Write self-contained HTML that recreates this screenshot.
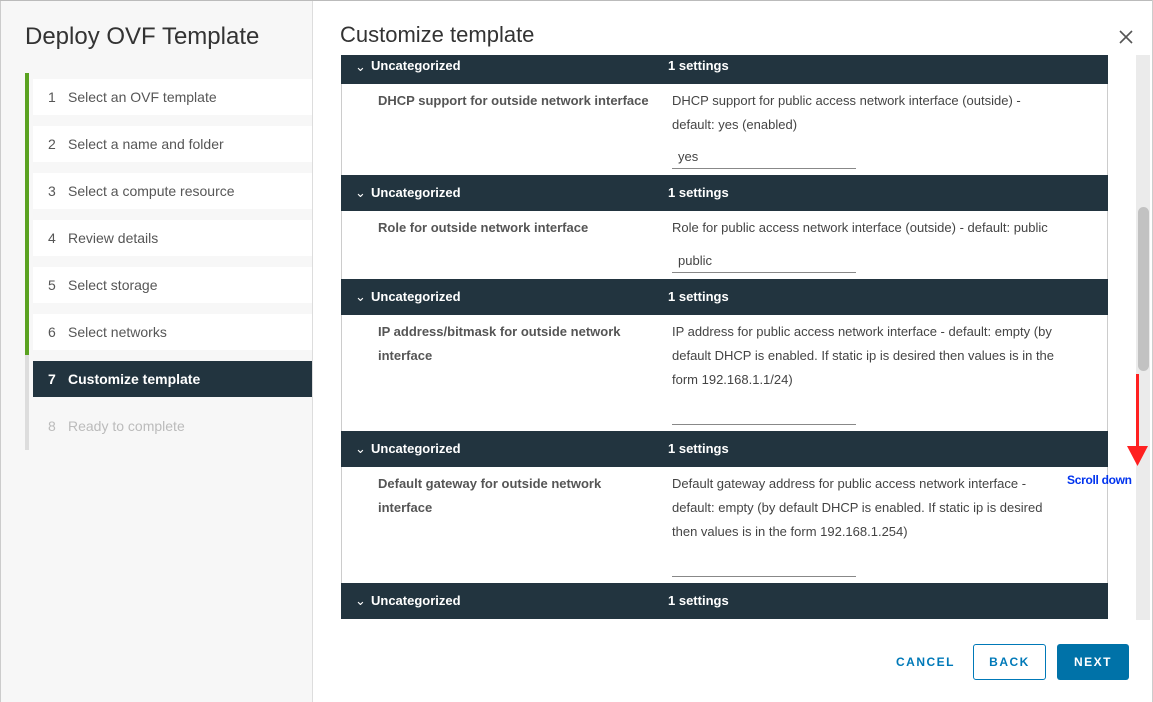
<!DOCTYPE html><html><head><meta charset="utf-8"><style>
*{box-sizing:border-box;margin:0;padding:0}
body{width:1153px;height:702px;overflow:hidden;background:#fff;font-family:"Liberation Sans",sans-serif;position:relative;color:#565656}
.abs{position:absolute}
.left{left:0;top:0;width:313px;height:702px;background:#f7f7f7;border-right:1px solid #ddd;border-left:1px solid #ccc;border-top:1px solid #ccc}
.step{position:absolute;left:32px;width:279px;height:36px;background:#fff;font-size:14px;line-height:36px;padding-left:15px;color:#565656}
.step span{display:inline-block;width:20px}
.hdr{position:absolute;left:341px;width:767px;height:36px;background:#22343f;color:#fff;font-size:13px;font-weight:bold;line-height:36px}
.hdr .c{position:absolute;left:14px;top:0;font-weight:normal}
.hdr .t{position:absolute;left:30px}
.hdr .s{position:absolute;left:327px}
.row{position:absolute;left:341px;width:767px;border-left:1px solid #ccc;border-right:1px solid #ccc;background:#fff;font-size:13px;color:#444}
.lab{position:absolute;left:36px;width:292px;line-height:24px;font-weight:bold;color:#555}
.desc{position:absolute;left:330px;width:405px;line-height:24px}
.inp{position:absolute;left:330px;width:184px;border-bottom:1px solid #888;height:24px;line-height:24px;padding-left:6px;font-size:13px}
</style></head><body>
<div class="abs left">
<div class="abs" style="left:24px;top:22px;font-size:24px;color:#333">Deploy OVF Template</div>
<div class="abs" style="left:24px;top:72px;width:4px;height:282px;background:#5aa220"></div>
<div class="abs" style="left:24px;top:354px;width:4px;height:95px;background:#ddd"></div>
<div class="step" style="top:78px"><span>1</span>Select an OVF template</div>
<div class="step" style="top:125px"><span>2</span>Select a name and folder</div>
<div class="step" style="top:172px"><span>3</span>Select a compute resource</div>
<div class="step" style="top:219px"><span>4</span>Review details</div>
<div class="step" style="top:266px"><span>5</span>Select storage</div>
<div class="step" style="top:313px"><span>6</span>Select networks</div>
<div class="step" style="top:360px;background:#22343f;color:#fff;font-weight:bold"><span>7</span>Customize template</div>
<div class="step" style="top:407px;background:transparent;color:#bbb"><span>8</span>Ready to complete</div>
</div>
<div class="abs" style="left:0;top:0;width:1153px;height:1px;background:#bbb"></div>
<div class="abs" style="left:1152px;top:0;width:1px;height:702px;background:#ccc"></div>
<div class="abs" style="left:340px;top:22px;font-size:22px;color:#333">Customize template</div>
<svg class="abs" style="left:1119px;top:30px" width="14" height="14"><path d="M1 1L13 13M13 1L1 13" stroke="#555" stroke-width="1.6"/></svg>
<div class="hdr" style="top:48px;height:36px"><span class="c" style="top:1px">⌄</span><span class="t" style="top:0">Uncategorized</span><span class="s" style="top:0">1 settings</span></div>
<div class="abs" style="left:341px;top:48px;width:767px;height:7px;background:#fff"></div>
<div class="row" style="top:84px;height:91px"><div class="lab" style="top:5px">DHCP support for outside network interface</div><div class="desc" style="top:5px;width:385px">DHCP support for public access network interface (outside) - default: yes (enabled)</div><div class="inp" style="top:61px">yes</div></div>
<div class="hdr" style="top:175px"><span class="c">⌄</span><span class="t">Uncategorized</span><span class="s">1 settings</span></div>
<div class="row" style="top:211px;height:68px"><div class="lab" style="top:5px">Role for outside network interface</div><div class="desc" style="top:5px;width:420px">Role for public access network interface (outside) - default: public</div><div class="inp" style="top:38px">public</div></div>
<div class="hdr" style="top:279px"><span class="c">⌄</span><span class="t">Uncategorized</span><span class="s">1 settings</span></div>
<div class="row" style="top:315px;height:116px"><div class="lab" style="top:5px;width:270px">IP address/bitmask for outside network interface</div><div class="desc" style="top:5px">IP address for public access network interface - default: empty (by default DHCP is enabled. If static ip is desired then values is in the form 192.168.1.1/24)</div><div class="inp" style="top:86px"></div></div>
<div class="hdr" style="top:431px"><span class="c">⌄</span><span class="t">Uncategorized</span><span class="s">1 settings</span></div>
<div class="row" style="top:467px;height:116px"><div class="lab" style="top:5px;width:250px">Default gateway for outside network interface</div><div class="desc" style="top:5px;width:395px">Default gateway address for public access network interface - default: empty (by default DHCP is enabled. If static ip is desired then values is in the form 192.168.1.254)</div><div class="inp" style="top:86px"></div></div>
<div class="hdr" style="top:583px"><span class="c">⌄</span><span class="t">Uncategorized</span><span class="s">1 settings</span></div>
<div class="abs" style="left:1136px;top:55px;width:14px;height:565px;background:#ebebeb"></div>
<div class="abs" style="left:1138px;top:207px;width:11px;height:164px;background:#c2c2c2;border-radius:6px"></div>
<div class="abs" style="left:1136px;top:374px;width:3px;height:80px;background:#ff2020"></div>
<svg class="abs" style="left:1127px;top:446px" width="21" height="20"><path d="M0 0H21L10.5 20Z" fill="#ff2020"/></svg>
<div class="abs" style="left:1067px;top:473px;font-size:12px;font-weight:bold;color:#0033ee;letter-spacing:-0.3px">Scroll down</div>
<div class="abs" style="left:896px;top:655px;font-size:12px;letter-spacing:1.5px;color:#0079b8;font-weight:bold">CANCEL</div>
<div class="abs" style="left:973px;top:644px;width:73px;height:36px;border:1px solid #0079b8;border-radius:3px;text-align:center;line-height:34px;font-size:12px;letter-spacing:1.5px;color:#0079b8;font-weight:bold">BACK</div>
<div class="abs" style="left:1057px;top:644px;width:72px;height:36px;background:#0072a8;border-radius:3px;text-align:center;line-height:36px;font-size:12px;letter-spacing:1.5px;color:#fff;font-weight:bold">NEXT</div>
</body></html>
